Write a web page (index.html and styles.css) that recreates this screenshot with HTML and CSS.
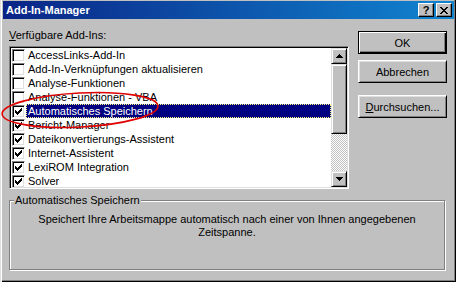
FILE: index.html
```html
<!DOCTYPE html>
<html lang="de">
<head>
  <meta charset="UTF-8" />
  <title>Add-In-Manager</title>
  <link rel="stylesheet" href="styles.css">
</head>
<body>
  <div class="window">
    <div class="titlebar">
      <span class="title">Add-In-Manager</span>
      <div class="caption-btns">
        <span class="cbtn help">?</span>
        <span class="cbtn close">
          <svg width="8" height="7" viewBox="0 0 8 7" shape-rendering="crispEdges">
            <path d="M0 0h2v1h-2zM6 0h2v1h-2zM1 1h2v1h-2zM5 1h2v1h-2zM2 2h4v1h-4zM3 3h2v1h-2zM2 4h4v1h-4zM1 5h2v1h-2zM5 5h2v1h-2zM0 6h2v1h-2zM6 6h2v1h-2z" fill="#000"/>
          </svg>
        </span>
      </div>
    </div>

    <div class="content">
      <div class="top">
        <div class="left">
          <div class="label"><u>V</u>erfügbare Add-Ins:</div>
          <div class="listbox">
            <ul class="items">
              <li class="item"><span class="check"></span><span class="item-text">AccessLinks-Add-In</span></li>
              <li class="item"><span class="check"></span><span class="item-text">Add-In-Verknüpfungen aktualisieren</span></li>
              <li class="item"><span class="check"></span><span class="item-text">Analyse-Funktionen</span></li>
              <li class="item"><span class="check"></span><span class="item-text">Analyse-Funktionen - VBA</span></li>
              <li class="item selected"><span class="check"><svg class="tick" width="11" height="11" viewBox="0 0 11 11" shape-rendering="crispEdges"><path d="M2 4h1v3h-1zM3 5h1v3h-1zM4 6h1v3h-1zM5 5h1v3h-1zM6 4h1v3h-1zM7 3h1v3h-1zM8 2h1v3h-1z"/></svg></span><span class="item-text">Automatisches Speichern</span></li>
              <li class="item"><span class="check"><svg class="tick" width="11" height="11" viewBox="0 0 11 11" shape-rendering="crispEdges"><path d="M2 4h1v3h-1zM3 5h1v3h-1zM4 6h1v3h-1zM5 5h1v3h-1zM6 4h1v3h-1zM7 3h1v3h-1zM8 2h1v3h-1z"/></svg></span><span class="item-text">Bericht-Manager</span></li>
              <li class="item"><span class="check"><svg class="tick" width="11" height="11" viewBox="0 0 11 11" shape-rendering="crispEdges"><path d="M2 4h1v3h-1zM3 5h1v3h-1zM4 6h1v3h-1zM5 5h1v3h-1zM6 4h1v3h-1zM7 3h1v3h-1zM8 2h1v3h-1z"/></svg></span><span class="item-text">Dateikonvertierungs-Assistent</span></li>
              <li class="item"><span class="check"><svg class="tick" width="11" height="11" viewBox="0 0 11 11" shape-rendering="crispEdges"><path d="M2 4h1v3h-1zM3 5h1v3h-1zM4 6h1v3h-1zM5 5h1v3h-1zM6 4h1v3h-1zM7 3h1v3h-1zM8 2h1v3h-1z"/></svg></span><span class="item-text">Internet-Assistent</span></li>
              <li class="item"><span class="check"><svg class="tick" width="11" height="11" viewBox="0 0 11 11" shape-rendering="crispEdges"><path d="M2 4h1v3h-1zM3 5h1v3h-1zM4 6h1v3h-1zM5 5h1v3h-1zM6 4h1v3h-1zM7 3h1v3h-1zM8 2h1v3h-1z"/></svg></span><span class="item-text">LexiROM Integration</span></li>
              <li class="item"><span class="check"><svg class="tick" width="11" height="11" viewBox="0 0 11 11" shape-rendering="crispEdges"><path d="M2 4h1v3h-1zM3 5h1v3h-1zM4 6h1v3h-1zM5 5h1v3h-1zM6 4h1v3h-1zM7 3h1v3h-1zM8 2h1v3h-1z"/></svg></span><span class="item-text">Solver</span></li>
            </ul>
            <div class="scrollbar">
              <div class="sb-btn">
                <svg width="7" height="4" viewBox="0 0 7 4" shape-rendering="crispEdges"><path d="M3 0h1v1h1v1h1v1h1v1h-7v-1h1v-1h1v-1h1z" fill="#000"/></svg>
              </div>
              <div class="sb-thumb"></div>
              <div class="sb-track"></div>
              <div class="sb-btn">
                <svg width="7" height="4" viewBox="0 0 7 4" shape-rendering="crispEdges"><path d="M0 0h7v1h-1v1h-1v1h-1v1h-1v-1h-1v-1h-1v-1h-1z" fill="#000"/></svg>
              </div>
            </div>
          </div>
        </div>

        <div class="buttons">
          <div class="btn default">OK</div>
          <div class="btn cancel">Abbrechen</div>
          <div class="btn browse"><u>D</u>urchsuchen...</div>
        </div>
      </div>

      <div class="group">
        <span class="group-title">Automatisches Speichern</span>
        <div class="group-text">Speichert Ihre Arbeitsmappe automatisch nach einer von Ihnen angegebenen<br>Zeitspanne.</div>
      </div>
    </div>

    <!-- red marker drawn over the dialog -->
    <svg class="annotation" width="456" height="282" viewBox="0 0 456 282">
      <ellipse cx="80" cy="110" rx="78" ry="17" transform="rotate(-3 80 110)" fill="none" stroke="#e00000" stroke-width="1.6"/>
    </svg>
  </div>
</body>
</html>
```

FILE: styles.css
```css
html, body {
  margin: 0;
  padding: 0;
}

body {
  width: 456px;
  height: 282px;
  overflow: hidden;
  font-family: "Liberation Sans", Arial, sans-serif;
  font-size: 11px;
  color: #000;
  background: #c0c0c0;
}

.window {
  position: relative;
  box-sizing: border-box;
  width: 456px;
  height: 282px;
  padding: 1px 2px 2px 3px;
  background: #c0c0c0;
  box-shadow: inset 1px 0 #dfdfdf, inset 2px 0 #fff, inset -1px -1px #000, inset -2px -2px #808080;
  display: flex;
  flex-direction: column;
}

/* title bar */
.titlebar {
  height: 18px;
  display: flex;
  align-items: center;
  padding: 0 2px 0 3px;
  background: linear-gradient(to right, #0a2486, #1084d0);
}

.title {
  color: #fff;
  font-weight: bold;
  line-height: 18px;
}

.caption-btns {
  margin-left: auto;
  display: flex;
  gap: 2px;
}

.cbtn {
  width: 16px;
  height: 14px;
  box-sizing: border-box;
  display: flex;
  align-items: center;
  justify-content: center;
  background: #c0c0c0;
  border: 1px solid;
  border-color: #fff #000 #000 #fff;
  box-shadow: inset -1px -1px #808080;
  font-weight: bold;
  font-size: 11px;
  line-height: 12px;
}

/* main area */
.content {
  flex: 1;
  display: flex;
  flex-direction: column;
  padding: 10px 7px 0 6px;
}

.top {
  display: flex;
  gap: 9px;
}

.left {
  width: 340px;
}

.label {
  line-height: 13px;
  height: 13px;
  margin-bottom: 4px;
}

.listbox {
  height: 143px;
  box-sizing: border-box;
  display: flex;
  padding: 1px;
  background: #fff;
  border: 1px solid;
  border-color: #808080 #fff #fff #808080;
  box-shadow: inset 1px 1px #000, inset -1px -1px #dfdfdf;
}

.items {
  flex: 1;
  list-style: none;
  margin: 0;
  padding: 0;
  overflow: hidden;
}

.item {
  display: flex;
  align-items: center;
  height: 14px;
}

.check {
  width: 13px;
  height: 13px;
  box-sizing: border-box;
  margin-left: 1px;
  background: #fff;
  border: 1px solid;
  border-color: #808080 #fff #fff #808080;
  box-shadow: inset 1px 1px #000, inset -1px -1px #dfdfdf;
}

.tick {
  display: block;
  fill: #000;
}

.item-text {
  flex: 1;
  margin-left: 1px;
  padding: 0 2px;
  height: 14px;
  line-height: 14px;
  white-space: nowrap;
}

.item.selected .item-text {
  background: #000080;
  color: #fff;
  outline: 1px dotted #ffff80;
  outline-offset: -1px;
}

/* scroll bar */
.scrollbar {
  width: 16px;
  display: flex;
  flex-direction: column;
}

.sb-btn,
.sb-thumb {
  box-sizing: border-box;
  background: #c0c0c0;
  border: 1px solid;
  border-color: #dfdfdf #000 #000 #dfdfdf;
  box-shadow: inset 1px 1px #fff, inset -1px -1px #808080;
}

.sb-btn {
  height: 16px;
  display: flex;
  align-items: center;
  justify-content: center;
}

.sb-thumb {
  height: 70px;
}

.sb-track {
  flex: 1;
  background: repeating-conic-gradient(#c0c0c0 0 25%, #fff 0 50%) 0 0 / 2px 2px;
}

/* push buttons */
.buttons {
  width: 89px;
  display: flex;
  flex-direction: column;
  padding-top: 2px;
}

.btn {
  height: 23px;
  box-sizing: border-box;
  display: flex;
  align-items: center;
  justify-content: center;
  background: #c0c0c0;
  border: 1px solid;
  border-color: #fff #000 #000 #fff;
  box-shadow: inset 1px 1px #dfdfdf, inset -1px -1px #808080;
}

.btn.default {
  border-color: #000;
  box-shadow: inset 1px 1px #fff, inset -1px -1px #000, inset -2px -2px #808080;
}

.btn.cancel {
  margin-top: 6px;
}

.btn.browse {
  margin-top: 12px;
}

/* group box */
.group {
  height: 70px;
  box-sizing: border-box;
  margin-top: 11px;
  margin-right: 2px;
  display: flex;
  flex-direction: column;
  border: 1px solid #808080;
  box-shadow: inset 1px 1px #fff, 1px 1px #fff;
}

.group-title {
  align-self: flex-start;
  margin: -7px 0 0 4px;
  padding: 0 1px;
  line-height: 13px;
  background: #c0c0c0;
}

.group-text {
  margin-top: 6px;
  text-align: center;
  line-height: 13px;
}

.annotation {
  position: absolute;
  left: 0;
  top: 0;
  pointer-events: none;
}
```
